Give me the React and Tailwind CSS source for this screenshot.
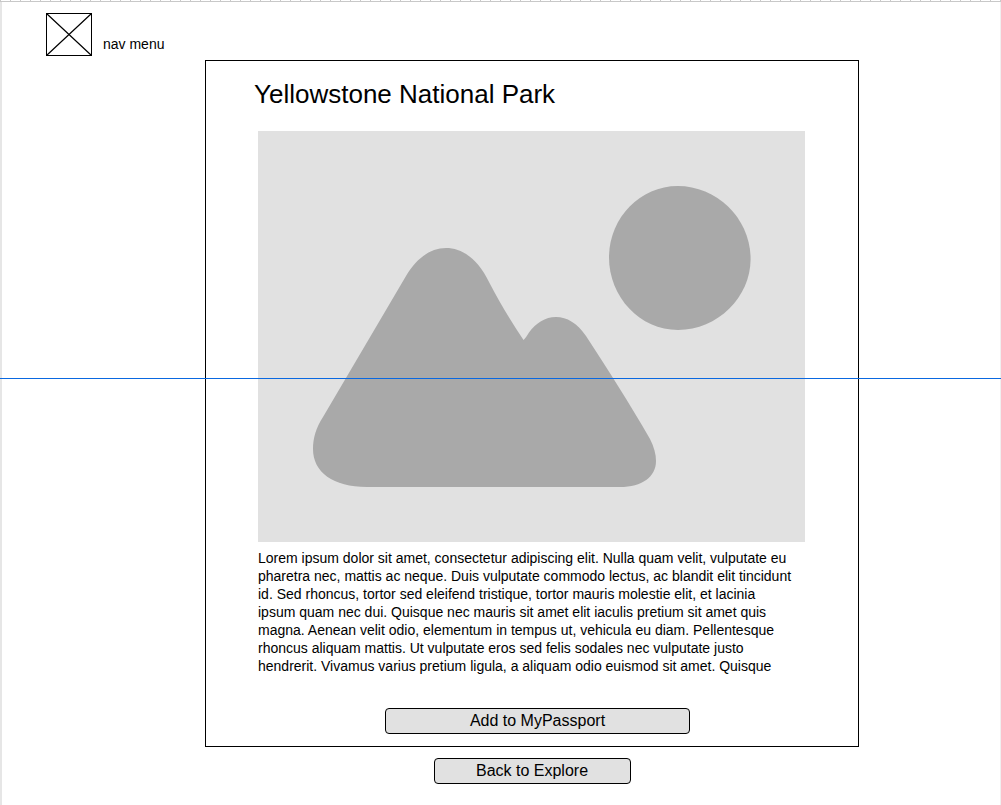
const DESCRIPTION =
  "Lorem ipsum dolor sit amet, consectetur adipiscing elit. Nulla quam velit, vulputate eu pharetra nec, mattis ac neque. Duis vulputate commodo lectus, ac blandit elit tincidunt id. Sed rhoncus, tortor sed eleifend tristique, tortor mauris molestie elit, et lacinia ipsum quam nec dui. Quisque nec mauris sit amet elit iaculis pretium sit amet quis magna. Aenean velit odio, elementum in tempus ut, vehicula eu diam. Pellentesque rhoncus aliquam mattis. Ut vulputate eros sed felis sodales nec vulputate justo hendrerit. Vivamus varius pretium ligula, a aliquam odio euismod sit amet. Quisque";

function Ruler() {
  return (
    <div className="h-[2px] border-b border-[#c8c8c8] bg-[repeating-linear-gradient(to_right,#c8c8c8_0,#c8c8c8_1px,#fff_1px,#fff_10px)]" />
  );
}

function LogoPlaceholder() {
  return (
    <svg className="block h-[43px] w-[46px] shrink-0" viewBox="0 0 46 43" fill="none" stroke="#000" aria-hidden="true">
      <rect x="0.5" y="0.5" width="45" height="42" />
      <path d="M0.5 0.5 45.5 42.5M45.5 0.5 0.5 42.5" strokeWidth="1.2" />
    </svg>
  );
}

function PhotoPlaceholder() {
  return (
    <svg className="block h-auto w-full" viewBox="0 0 547 411" role="img" aria-label="Park photo">
      <rect width="547" height="411" fill="#e1e1e1" />
      <g fill="#a9a9a9">
        <path d="M419.7 55C459.5 55 492.6 88 492.6 128C492.6 166 459.5 199 420 199C382 199 351 166 351 126.500C351 87 382 55 419.700 55Z" />
        <path d="M188 117C172 117 158 128 148 145L65 286C58 297 55 307 55 318C55 341 75 356 109 356H362C384 356 398 346 398 330C398 323 396 316 392 308C372 273 349 237 328 205C319 192 309 186 298 186C287 186 278 192 271 201.500C269 204.500 267.500 207 265.500 209C252 189 241 170 231 151C220 128 204 117 188 117Z" />
      </g>
    </svg>
  );
}

function ActionButton({ className, children }) {
  return (
    <button
      type="button"
      className={`h-[26px] max-w-full rounded border border-black bg-[#e1e1e1] text-base leading-6 ${className}`}
    >
      {children}
    </button>
  );
}

export default function App() {
  return (
    <div className="relative min-h-screen bg-white font-['Liberation_Sans',Arial,sans-serif] text-black">
      <Ruler />
      <div className="min-h-[calc(100vh-2px)] border-r border-l-2 border-r-[#f0f0f0] border-l-[#e6e6e6] pb-5">
        <header className="flex items-end gap-[11px] pt-[11px] pl-11">
          <LogoPlaceholder />
          <nav className="pb-[3px]">
            <a href="#menu" className="block text-sm leading-[18px]">
              nav menu
            </a>
          </nav>
        </header>
        <main className="mt-1 flex flex-col items-center pl-[62px]">
          <article className="w-full max-w-[654px] border border-black pt-[17px] pb-3">
            <h1 className="px-12 text-[26px] leading-8">Yellowstone National Park</h1>
            <div className="mt-[21px] pr-[53px] pl-[52px]">
              <PhotoPlaceholder />
              <p className="mt-[7px] pr-2.5 text-sm leading-[18px]">{DESCRIPTION}</p>
              <div className="mt-[33px] flex justify-center pl-3">
                <ActionButton className="w-[305px]">Add to MyPassport</ActionButton>
              </div>
            </div>
          </article>
          <ActionButton className="mt-[11px] w-[197px]">Back to Explore</ActionButton>
        </main>
      </div>
      <div className="pointer-events-none absolute inset-x-0 top-[378px] h-px bg-[#0a68e0]" />
    </div>
  );
}
